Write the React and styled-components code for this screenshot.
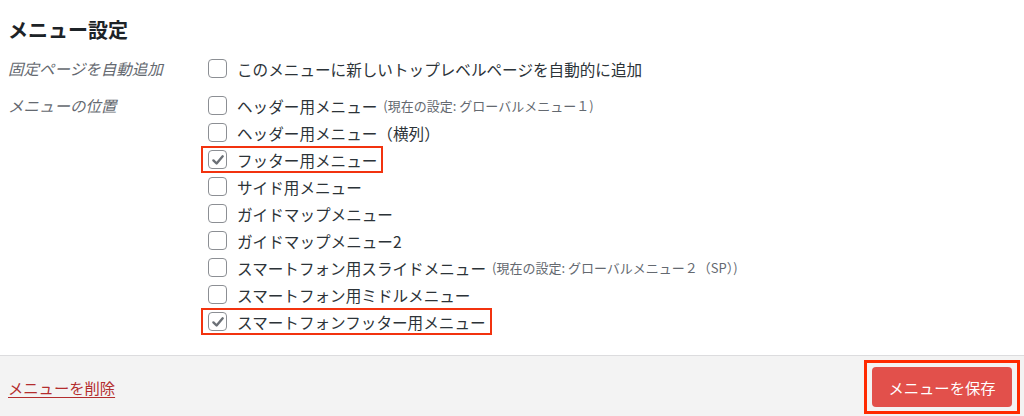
import styled, { createGlobalStyle } from "styled-components";

const GlobalStyle = createGlobalStyle`
  body {
    margin: 0;
    background: #fff;
    font-family: "Noto Sans CJK JP", "Noto Sans", sans-serif;
    color: #1d2327;
  }
`;

const locations = [
  { name: "ヘッダー用メニュー", note: "(現在の設定: グローバルメニュー１)" },
  { name: "ヘッダー用メニュー（横列）" },
  { name: "フッター用メニュー", checked: true },
  { name: "サイド用メニュー" },
  { name: "ガイドマップメニュー" },
  { name: "ガイドマップメニュー2" },
  { name: "スマートフォン用スライドメニュー", note: "(現在の設定: グローバルメニュー２（SP）)" },
  { name: "スマートフォン用ミドルメニュー" },
  { name: "スマートフォンフッター用メニュー", checked: true },
];

const Checkbox = ({ checked }) => (
  <Box>
    {checked && (
      <svg width="14" height="14" viewBox="0 0 14 14">
        <path d="M2.4 7.4 L5.6 10.5 L11.7 3.3" fill="none" stroke="#6b7076" strokeWidth="2.4" strokeLinecap="round" strokeLinejoin="round" />
      </svg>
    )}
  </Box>
);

const App = () => {
  return (
    <>
      <GlobalStyle />
      <Wrapper>
        <Title>メニュー設定</Title>
        <Section>
          <Label>固定ページを自動追加</Label>
          <Options>
            <Option>
              <Checkbox />
              <span>このメニューに新しいトップレベルページを自動的に追加</span>
            </Option>
          </Options>
        </Section>
        <Section $top={10}>
          <Label>メニューの位置</Label>
          <Options>
            {locations.map((loc, key) => (
              <Option key={key} $marked={loc.checked}>
                <Checkbox checked={loc.checked} />
                <span>{loc.name}</span>
                {loc.note && <Note>{loc.note}</Note>}
              </Option>
            ))}
          </Options>
        </Section>
      </Wrapper>
      <Footer>
        <DeleteLink href="#">メニューを削除</DeleteLink>
        <SaveFrame>
          <SaveButton>メニューを保存</SaveButton>
        </SaveFrame>
      </Footer>
    </>
  );
};

const Wrapper = styled.div`
  padding: 16px 0 20px 8px;
  border-bottom: 1px solid #dcdcde;
`;

const Title = styled.h2`
  margin: 0 0 11px;
  font-size: 20px;
  line-height: 28px;
  font-weight: 700;
  color: #1d2327;
`;

const Section = styled.div`
  display: flex;
  margin-top: ${(p) => p.$top || 0}px;
`;

const Label = styled.div`
  width: 200px;
  flex-shrink: 0;
  font-size: 15.5px;
  line-height: 27px;
  font-style: italic;
  color: #646970;
`;

const Options = styled.div`
  display: flex;
  flex-direction: column;
  align-items: flex-start;
`;

const Option = styled.label`
  display: inline-flex;
  align-items: center;
  gap: 10px;
  height: 27px;
  box-sizing: border-box;
  margin-left: -7px;
  padding: 0 4px 0 5px;
  border: 2px solid ${(p) => (p.$marked ? "#f2330f" : "transparent")};
  font-size: 15.6px;
  color: #2c3338;
  white-space: nowrap;
`;

const Box = styled.span`
  display: flex;
  align-items: center;
  justify-content: center;
  width: 19px;
  height: 19px;
  box-sizing: border-box;
  border: 1px solid #8c8f94;
  border-radius: 4px;
  background: #fff;
  flex-shrink: 0;
`;

const Note = styled.span`
  margin-left: -4px;
  font-size: 13px;
  color: #646970;
`;

const Footer = styled.div`
  display: flex;
  align-items: center;
  justify-content: space-between;
  height: 61px;
  padding: 0 4px 0 8px;
  background: #f3f3f3;
`;

const DeleteLink = styled.a`
  font-size: 15.3px;
  color: #b32d2e;
  text-decoration: underline;
  text-underline-offset: 3px;
`;

const SaveFrame = styled.div`
  padding: 4px 5px;
  border: 3px solid #ff2a00;
`;

const SaveButton = styled.button`
  width: 140px;
  height: 40px;
  border: none;
  border-radius: 4px;
  background: #e2504b;
  color: #fff;
  font-family: inherit;
  font-size: 15.3px;
`;

export default App;
